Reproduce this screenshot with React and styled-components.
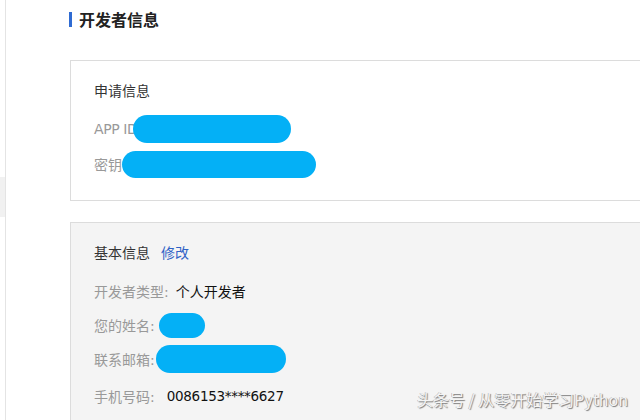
import React from "react";
import styled, { createGlobalStyle } from "styled-components";

const Global = createGlobalStyle`
  html, body { margin: 0; padding: 0; background: #fff; overflow: hidden; }
  body { font-family: "DejaVu Sans", "Noto Sans CJK SC", sans-serif; }
`;

const Page = styled.div`
  position: relative;
  display: flex;
  width: 640px;
  height: 420px;
  overflow: hidden;
  background: #fff;
`;

const Sidebar = styled.div`
  width: 5px;
  flex: none;
  border-right: 1px solid #e4e4e4;
  display: flex;
  flex-direction: column;
`;

const SideMark = styled.div`
  margin-top: 177px;
  height: 40px;
  background: #f1f1f1;
`;

const Main = styled.main`
  flex: none;
  width: 620px;
  padding-left: 64px;
  display: flex;
  flex-direction: column;
`;

const Title = styled.h2`
  margin: 10px 0 0 -1px;
  height: 18px;
  display: flex;
  align-items: center;
  gap: 7px;
  font-family: "Noto Sans CJK SC", sans-serif;
  font-size: 16px;
  font-weight: 700;
  color: #222;
  line-height: 18px;
  &::before {
    content: "";
    width: 3px;
    height: 15px;
    background: #2f6bd2;
  }
`;

const Card = styled.section`
  margin-top: ${(p) => p.$mt}px;
  width: 620px;
  box-sizing: border-box;
  border: 1px solid #dcdcdc;
  background: ${(p) => (p.$muted ? "#f4f4f4" : "#fff")};
  padding: 14px 23px ${(p) => p.$pb}px;
  display: flex;
  flex-direction: column;
  gap: ${(p) => p.$gap}px;
`;

const Header = styled.div`
  height: 30px;
  display: flex;
  align-items: center;
  gap: 11px;
  margin-bottom: ${(p) => p.$mb}px;
  font-family: "Noto Sans CJK SC", sans-serif;
  font-size: 14px;
  color: #333;
`;

const Link = styled.a`
  color: #2f62c6;
  text-decoration: none;
  cursor: pointer;
`;

const Row = styled.div`
  height: 28px;
  margin-top: ${(p) => p.$mt || 0}px;
  display: flex;
  align-items: center;
`;

const Label = styled.span`
  font-family: "DejaVu Sans", "Noto Sans CJK SC", sans-serif;
  color: #999;
  font-size: 14px;
  letter-spacing: ${(p) => (p.$latin ? "-0.4px" : "0")};
`;

const Value = styled.span`
  margin-left: ${(p) => p.$ml}px;
  color: #111;
  font-family: "DejaVu Sans", "Noto Sans CJK SC", sans-serif;
  font-size: 13.5px;
  letter-spacing: -0.3px;
`;

const CnValue = styled(Value)`
  font-family: "Noto Sans CJK SC", sans-serif;
  font-size: 14px;
  letter-spacing: 0;
`;

const Pill = styled.span`
  display: inline-block;
  height: ${(p) => p.$h}px;
  width: ${(p) => p.$w}px;
  margin-left: ${(p) => p.$ml}px;
  border-radius: 14px;
  background: #04b0f6;
`;

const Watermark = styled.div`
  position: absolute;
  right: 12px;
  bottom: 9px;
  font-family: "Noto Sans CJK SC", sans-serif;
  font-size: 16px;
  color: #f4f4f4;
  letter-spacing: 0;
  text-shadow: 1px 1px 1px #7a7a7a, -0.5px -0.5px 0 #aaa;
`;

export default function App() {
  return (
    <Page>
      <Global />
      <Sidebar>
        <SideMark />
      </Sidebar>
      <Main>
        <Title>开发者信息</Title>
        <Card $mt={32} $pb={22} $gap={7}>
          <Header $mb={3}>申请信息</Header>
          <Row>
            <Label $latin>APP ID</Label>
            <Pill $w={158} $h={28} $ml={-4} />
          </Row>
          <Row>
            <Label>密钥</Label>
            <Pill $w={194} $h={27} $ml={0} />
          </Row>
        </Card>
        <Card $mt={21} $muted $pb={40} $gap={6}>
          <Header $mb={4}>
            基本信息 <Link>修改</Link>
          </Header>
          <Row>
            <Label>开发者类型:</Label>
            <CnValue $ml={7}>个人开发者</CnValue>
          </Row>
          <Row>
            <Label>您的姓名:</Label>
            <Pill $w={46} $h={25} $ml={4} />
          </Row>
          <Row>
            <Label>联系邮箱:</Label>
            <Pill $w={130} $h={28} $ml={1} />
          </Row>
          <Row $mt={3}>
            <Label>手机号码:</Label>
            <Value $ml={12}>0086153****6627</Value>
          </Row>
        </Card>
      </Main>
      <Watermark>头条号 / 从零开始学习Python</Watermark>
    </Page>
  );
}
